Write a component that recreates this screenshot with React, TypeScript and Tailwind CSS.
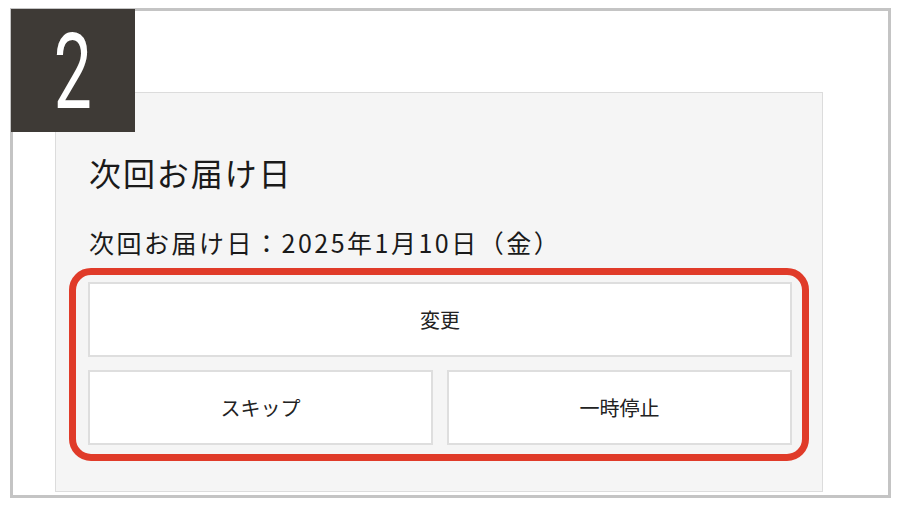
import React from 'react';

const jp = { fontFamily: '"Noto Sans CJK JP", "Noto Sans", sans-serif' };

const ActionButton: React.FC<{ label: string }> = ({ label }) => (
  <button className="h-[75px] w-full bg-white border-2 border-[#dedede] text-[20px] text-[#222] flex items-center justify-center">
    {label}
  </button>
);

const App: React.FC = () => {
  return (
    <div className="w-[900px] h-[506px] bg-white pt-[8px] pl-[10px]" style={jp}>
      <div className="relative w-[881px] h-[490px] border-[3px] border-[#c4c4c4] bg-white pl-[42px] pt-[81px]">
        {/* step number badge */}
        <div className="absolute left-[-2px] top-[-2px] w-[124px] h-[123px] bg-[#3e3a36] flex items-center justify-center">
          <span className="text-white text-[106px] font-normal leading-none scale-x-[0.64] translate-y-[1px]" style={{ fontFamily: 'Roboto, sans-serif' }}>
            2
          </span>
        </div>

        <div className="w-[768px] h-[400px] bg-[#f5f5f5] border border-[#dcdcdc] px-[13px] pt-[59px]">
          <h2 className="pl-[20px] text-[32px] leading-[40px] text-[#1a1a1a] tracking-[0.06em]">次回お届け日</h2>
          <p className="pl-[20px] mt-[34px] text-[25px] leading-[32px] text-[#1a1a1a] tracking-[0.1em]">
            次回お届け日：2025年1月10日（金）
          </p>

          <div className="mt-[10px] border-[7px] border-[#e03b29] rounded-[22px] pt-[7px] pb-[9px] pl-[12px] pr-[10px] flex flex-col gap-[13px]">
            <ActionButton label="変更" />
            <div className="grid grid-cols-2 gap-[14px]">
              <ActionButton label="スキップ" />
              <ActionButton label="一時停止" />
            </div>
          </div>
        </div>
      </div>
    </div>
  );
};

export default App;
